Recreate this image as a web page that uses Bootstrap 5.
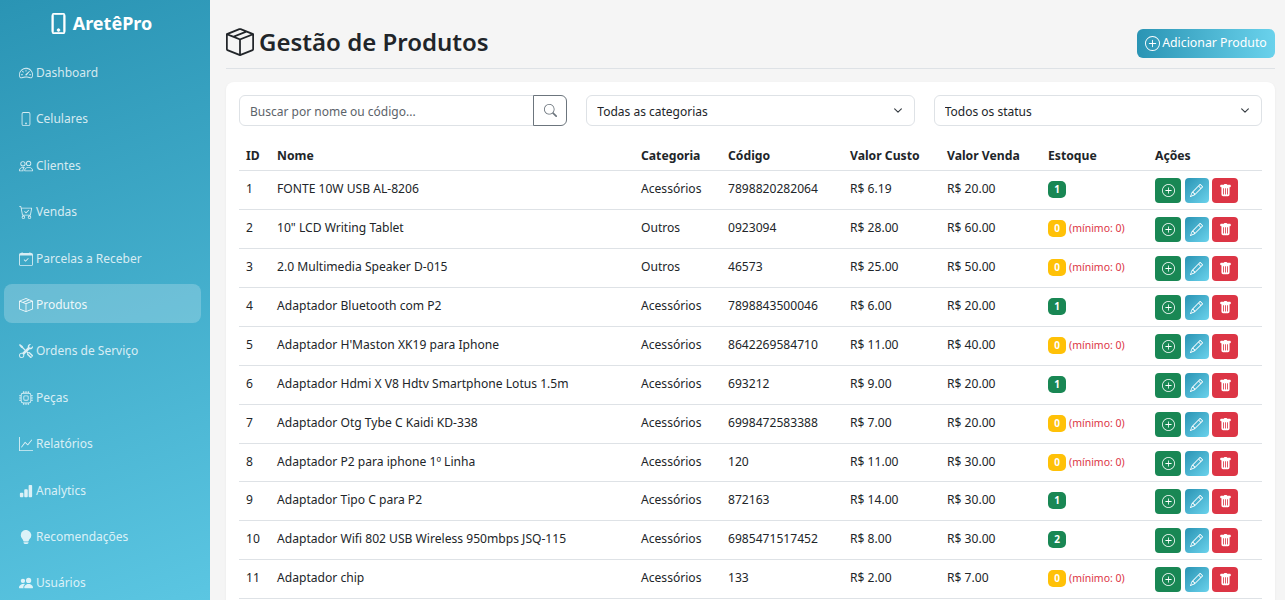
<!DOCTYPE html>
<html lang="pt-BR">
<head>
  <meta charset="UTF-8" />
  <title>Produtos | AretêPro</title>
  <meta name="viewport" content="width=device-width, initial-scale=1" />
  <link href="https://cdn.jsdelivr.net/npm/bootstrap@5.3.0/dist/css/bootstrap.min.css" rel="stylesheet" />
  <style>
    body {
      background: #f5f5f5;
      font-family: "Noto Sans", "Liberation Sans", sans-serif;
      font-size: 12px;
      color: #212529;
    }

    .ico { width: 1em; height: 1em; fill: currentColor; flex: none; }

    .lateral {
      width: 210px;
      flex: none;
      background: linear-gradient(160deg, #2a94b4, #5bc6e2);
    }
    .marca { font-size: 18px; font-weight: 700; color: #fff; height: 46px; margin-bottom: 6px; padding-right: 10px; }
    .marca .ico { font-size: 21px; stroke: #fff; stroke-width: .7; }
    .lateral .nav-link {
      display: flex;
      align-items: center;
      gap: 3px;
      height: 39px;
      margin: 0 9px 7.4px 4px;
      padding: 3px 15px 0;
      border-radius: 8px;
      color: rgba(255, 255, 255, .8);
      font-size: 12px;
    }
    .lateral .nav-link .ico { font-size: 14px; }
    .lateral .nav-link.ativo { background: rgba(255, 255, 255, .22); color: rgba(255, 255, 255, .9); }

    .conteudo { padding: 0 10px 0 16px; min-width: 0; }
    .topo { height: 69px; padding-top: 16px; border-bottom: 1px solid #dee2e6; margin-bottom: 13px; }
    .topo h1 { font-size: 24px; font-weight: 600; margin: 0; gap: 5px; }
    .topo h1 .ico { font-size: 28px; }
    .btn-gradiente {
      background: linear-gradient(90deg, #2a94b4, #6ad2ec);
      color: #fff;
      border: 0;
      font-size: 12.3px;
      height: 29px;
      width: 138px;
      margin-top: 2px;
      padding: 1px 0 0;
      gap: 2px;
      border-radius: 6px;
    }
    .btn-gradiente:hover { color: #fff; }
    .btn-gradiente .ico { font-size: 15px; }

    .painel { background: #fff; border-radius: 8px; padding: 13px; box-shadow: 0 1px 3px rgba(0, 0, 0, .05); }
    .filtros { --bs-gutter-x: 19px; margin-bottom: 14px; }
    .filtros .form-control, .filtros .form-select { font-size: 12px; height: 31px; border-radius: 6px; padding-top: 6px; padding-bottom: 4px; padding-left: 10px; }
    .filtros .form-select { background-size: 12px 9px; background-position: right 10px center; }
    .filtros .form-control::placeholder { color: #5c636a; }
    .filtros .btn { width: 34px; padding: 0; font-size: 13px; display: flex; align-items: center; justify-content: center; border-radius: 0 6px 6px 0; }

    .tabela { table-layout: fixed; width: 1023px; margin: 0; font-size: 12.1px; }
    .tabela th { font-size: 12.2px; font-weight: 700; padding: 7px 7px 5px; }
    .tabela td { padding: 9px 7px 0; height: 38.9px; vertical-align: top; }
    .c-id { width: 31px; } .c-nome { width: 364px; } .c-cat { width: 87px; } .c-cod { width: 122px; }
    .c-custo { width: 97px; } .c-venda { width: 101px; } .c-est { width: 107px; } .c-acoes { width: 114px; }

    .selo { font-size: 10px; font-weight: 700; width: 18px; height: 17px; padding: 0; line-height: 17px; border-radius: 5px; }
    .minimo { font-size: 10.5px; color: #dc3545; margin-left: 3px; }
    .botoes { gap: 3.5px; margin-top: -2px; }
    .acao { height: 25px; width: 26px; padding: 0; border: 0; border-radius: 4px; font-size: 13px; color: #fff; display: inline-flex; align-items: center; justify-content: center; }
    .acao-edit { width: 24px; background: linear-gradient(135deg, #2a94b4, #6ad2ec); }
    .acao:hover { color: #fff; }
  </style>
</head>
<body>
  <svg width="0" height="0" class="position-absolute">
    <symbol id="i-phone" viewBox="0 0 16 16"><path d="M11 1a1 1 0 0 1 1 1v12a1 1 0 0 1-1 1H5a1 1 0 0 1-1-1V2a1 1 0 0 1 1-1h6zM5 0a2 2 0 0 0-2 2v12a2 2 0 0 0 2 2h6a2 2 0 0 0 2-2V2a2 2 0 0 0-2-2H5z"/><path d="M8 14a1 1 0 1 0 0-2 1 1 0 0 0 0 2z"/></symbol>
    <symbol id="i-speed" viewBox="0 0 16 16"><path d="M8 4a.5.5 0 0 1 .5.5V6a.5.5 0 0 1-1 0V4.5A.5.5 0 0 1 8 4zM3.732 5.732a.5.5 0 0 1 .707 0l.915.914a.5.5 0 1 1-.708.708l-.914-.915a.5.5 0 0 1 0-.707zM2 10a.5.5 0 0 1 .5-.5h1.586a.5.5 0 0 1 0 1H2.5A.5.5 0 0 1 2 10zm9.5 0a.5.5 0 0 1 .5-.5h1.5a.5.5 0 0 1 0 1H12a.5.5 0 0 1-.5-.5zm.754-4.246a.389.389 0 0 0-.527-.02L7.547 9.31a.91.91 0 1 0 1.302 1.258l3.434-4.297a.389.389 0 0 0-.029-.518z"/><path fill-rule="evenodd" d="M0 10a8 8 0 1 1 15.547 2.661c-.442 1.253-1.845 1.602-2.932 1.25C11.309 13.488 9.475 13 8 13c-1.474 0-3.31.488-4.615.911-1.087.352-2.49.003-2.932-1.25A7.988 7.988 0 0 1 0 10zm8-7a7 7 0 0 0-6.603 9.329c.203.575.923.876 1.68.63C4.397 12.533 6.358 12 8 12s3.604.532 4.923.96c.757.245 1.477-.056 1.68-.631A7 7 0 0 0 8 3z"/></symbol>
    <symbol id="i-people" viewBox="0 0 16 16"><path d="M15 14s1 0 1-1-1-4-5-4-5 3-5 4 1 1 1 1h8Zm-7.978-1A.261.261 0 0 1 7 12.996c.001-.264.167-1.03.76-1.72C8.312 10.629 9.282 10 11 10c1.717 0 2.687.63 3.24 1.276.593.69.758 1.457.76 1.72l-.008.002a.274.274 0 0 1-.014.002H7.022ZM11 7a2 2 0 1 0 0-4 2 2 0 0 0 0 4Zm3-2a3 3 0 1 1-6 0 3 3 0 0 1 6 0ZM6.936 9.28a5.88 5.88 0 0 0-1.23-.247A7.35 7.35 0 0 0 5 9c-4 0-5 3-5 4 0 .667.333 1 1 1h4.216A2.238 2.238 0 0 1 5 13c0-1.01.377-2.042 1.09-2.904.243-.294.526-.569.846-.816ZM4.92 10A5.493 5.493 0 0 0 4 13H1c0-.26.164-1.03.76-1.724.545-.636 1.492-1.256 3.16-1.275ZM1.5 5.5a3 3 0 1 1 6 0 3 3 0 0 1-6 0Zm3-2a2 2 0 1 0 0 4 2 2 0 0 0 0-4Z"/></symbol>
    <symbol id="i-cart" viewBox="0 0 16 16"><path d="M11.354 6.354a.5.5 0 0 0-.708-.708L8 8.293 6.854 7.146a.5.5 0 1 0-.708.708l1.5 1.5a.5.5 0 0 0 .708 0l3-3z"/><path d="M0 1.5A.5.5 0 0 1 .5 1H2a.5.5 0 0 1 .485.379L2.89 3H14.5a.5.5 0 0 1 .491.592l-1.5 8A.5.5 0 0 1 13 12H4a.5.5 0 0 1-.491-.408L2.01 3.607 1.61 2H.5a.5.5 0 0 1-.5-.5zM3.102 4l1.313 7h8.17l1.313-7H3.102zM5 12a2 2 0 1 0 0 4 2 2 0 0 0 0-4zm7 0a2 2 0 1 0 0 4 2 2 0 0 0 0-4zm-7 1a1 1 0 1 1 0 2 1 1 0 0 1 0-2zm7 0a1 1 0 1 1 0 2 1 1 0 0 1 0-2z"/></symbol>
    <symbol id="i-cal" viewBox="0 0 16 16"><path d="M10.854 7.146a.5.5 0 0 1 0 .708l-3 3a.5.5 0 0 1-.708 0l-1.5-1.5a.5.5 0 1 1 .708-.708L7.5 9.793l2.646-2.647a.5.5 0 0 1 .708 0z"/><path d="M3.5 0a.5.5 0 0 1 .5.5V1h8V.5a.5.5 0 0 1 1 0V1h1a2 2 0 0 1 2 2v11a2 2 0 0 1-2 2H2a2 2 0 0 1-2-2V3a2 2 0 0 1 2-2h1V.5a.5.5 0 0 1 .5-.5zM1 4v10a1 1 0 0 0 1 1h12a1 1 0 0 0 1-1V4H1z"/></symbol>
    <symbol id="i-box" viewBox="0 0 16 16"><path d="M8.186 1.113a.5.5 0 0 0-.372 0L1.846 3.5l2.404.961L10.404 2l-2.218-.887zm3.564 1.426L5.596 5 8 5.961 14.154 3.5l-2.404-.961zm3.25 1.7-6.5 2.6v7.922l6.5-2.6V4.24zM7.5 14.762V6.838L1 4.239v7.925l6.5 2.6zM7.443.184a1.5 1.5 0 0 1 1.114 0l7.129 2.852A.5.5 0 0 1 16 3.5v8.662a1 1 0 0 1-.629.928l-7.185 2.874a.5.5 0 0 1-.372 0L.63 13.09a1 1 0 0 1-.63-.928V3.5a.5.5 0 0 1 .314-.464L7.443.184z"/></symbol>
    <symbol id="i-tools" viewBox="0 0 16 16"><path d="M1 0 0 1l2.2 3.081a1 1 0 0 0 .815.419h.07a1 1 0 0 1 .708.293l2.675 2.675-2.617 2.654A3.003 3.003 0 0 0 0 13a3 3 0 1 0 5.878-.851l2.654-2.617.968.968-.305.914a1 1 0 0 0 .242 1.023l3.27 3.27a.997.997 0 0 0 1.414 0l1.586-1.586a.997.997 0 0 0 0-1.414l-3.27-3.27a1 1 0 0 0-1.023-.242L10.5 9.5l-.96-.96 2.68-2.643A3.005 3.005 0 0 0 16 3c0-.269-.035-.53-.102-.777l-2.14 2.141L12 4l-.364-1.757L13.777.102a3 3 0 0 0-3.675 3.68L7.462 6.46 4.793 3.793a1 1 0 0 1-.293-.707v-.071a1 1 0 0 0-.419-.814L1 0Zm9.646 10.646a.5.5 0 0 1 .708 0l2.914 2.915a.5.5 0 0 1-.707.707l-2.915-2.914a.5.5 0 0 1 0-.708ZM3 11l.471.242.529.026.287.445.445.287.026.529L5 13l-.242.471-.026.529-.445.287-.287.445-.529.026L3 15l-.471-.242L2 14.732l-.287-.445L1.268 14l-.026-.529L1 13l.242-.471.026-.529.445-.287.287-.445.529-.026L3 11Z"/></symbol>
    <symbol id="i-cpu" viewBox="0 0 16 16"><path d="M5 0a.5.5 0 0 1 .5.5V2h1V.5a.5.5 0 0 1 1 0V2h1V.5a.5.5 0 0 1 1 0V2h1V.5a.5.5 0 0 1 1 0V2A2.5 2.5 0 0 1 14 4.5h1.5a.5.5 0 0 1 0 1H14v1h1.5a.5.5 0 0 1 0 1H14v1h1.5a.5.5 0 0 1 0 1H14v1h1.5a.5.5 0 0 1 0 1H14a2.5 2.5 0 0 1-2.5 2.5v1.5a.5.5 0 0 1-1 0V14h-1v1.5a.5.5 0 0 1-1 0V14h-1v1.5a.5.5 0 0 1-1 0V14h-1v1.5a.5.5 0 0 1-1 0V14A2.5 2.5 0 0 1 2 11.5H.5a.5.5 0 0 1 0-1H2v-1H.5a.5.5 0 0 1 0-1H2v-1H.5a.5.5 0 0 1 0-1H2v-1H.5a.5.5 0 0 1 0-1H2A2.5 2.5 0 0 1 4.5 2V.5A.5.5 0 0 1 5 0zm-.5 3A1.5 1.5 0 0 0 3 4.5v7A1.5 1.5 0 0 0 4.5 13h7a1.5 1.5 0 0 0 1.5-1.5v-7A1.5 1.5 0 0 0 11.5 3h-7zM5 6.5A1.5 1.5 0 0 1 6.5 5h3A1.5 1.5 0 0 1 11 6.5v3A1.5 1.5 0 0 1 9.5 11h-3A1.5 1.5 0 0 1 5 9.5v-3zM6.5 6a.5.5 0 0 0-.5.5v3a.5.5 0 0 0 .5.5h3a.5.5 0 0 0 .5-.5v-3a.5.5 0 0 0-.5-.5h-3z"/></symbol>
    <symbol id="i-graph" viewBox="0 0 16 16"><path fill-rule="evenodd" d="M0 0h1v15h15v1H0V0Zm14.817 3.113a.5.5 0 0 1 .07.704l-4.5 5.5a.5.5 0 0 1-.74.037L7.06 6.767l-3.656 5.027a.5.5 0 0 1-.808-.588l4-5.5a.5.5 0 0 1 .758-.06l2.609 2.61 4.15-5.073a.5.5 0 0 1 .704-.07Z"/></symbol>
    <symbol id="i-bars" viewBox="0 0 16 16"><path d="M1 11a1 1 0 0 1 1-1h2a1 1 0 0 1 1 1v3a1 1 0 0 1-1 1H2a1 1 0 0 1-1-1v-3zm5-4a1 1 0 0 1 1-1h2a1 1 0 0 1 1 1v7a1 1 0 0 1-1 1H7a1 1 0 0 1-1-1V7zm5-5a1 1 0 0 1 1-1h2a1 1 0 0 1 1 1v12a1 1 0 0 1-1 1h-2a1 1 0 0 1-1-1V2z"/></symbol>
    <symbol id="i-bulb" viewBox="0 0 16 16"><path d="M2 6a6 6 0 1 1 10.174 4.31c-.203.196-.359.4-.453.619l-.762 1.769A.5.5 0 0 1 10.5 13h-5a.5.5 0 0 1-.46-.302l-.761-1.77a1.964 1.964 0 0 0-.453-.618A5.984 5.984 0 0 1 2 6zm3 8.5a.5.5 0 0 1 .5-.5h5a.5.5 0 0 1 0 1l-.224.447a1 1 0 0 1-.894.553H6.618a1 1 0 0 1-.894-.553L5.5 15a.5.5 0 0 1-.5-.5z"/></symbol>
    <symbol id="i-peoplef" viewBox="0 0 16 16"><path d="M7 14s-1 0-1-1 1-4 5-4 5 3 5 4-1 1-1 1H7Zm4-6a3 3 0 1 0 0-6 3 3 0 0 0 0 6Zm-5.784 6A2.238 2.238 0 0 1 5 13c0-1.355.68-2.75 1.936-3.72A6.325 6.325 0 0 0 5 9c-4 0-5 3-5 4s1 1 1 1h4.216ZM4.5 8a2.5 2.5 0 1 0 0-5 2.5 2.5 0 0 0 0 5Z"/></symbol>
    <symbol id="i-search" viewBox="0 0 16 16"><path d="M11.742 10.344a6.5 6.5 0 1 0-1.397 1.398h-.001c.03.04.062.078.098.115l3.85 3.85a1 1 0 0 0 1.415-1.414l-3.85-3.85a1.007 1.007 0 0 0-.115-.1zM12 6.5a5.5 5.5 0 1 1-11 0 5.5 5.5 0 0 1 11 0z"/></symbol>
    <symbol id="i-plus" viewBox="0 0 16 16"><path d="M8 15A7 7 0 1 1 8 1a7 7 0 0 1 0 14zm0 1A8 8 0 1 0 8 0a8 8 0 0 0 0 16z"/><path d="M8 4a.5.5 0 0 1 .5.5v3h3a.5.5 0 0 1 0 1h-3v3a.5.5 0 0 1-1 0v-3h-3a.5.5 0 0 1 0-1h3v-3A.5.5 0 0 1 8 4z"/></symbol>
    <symbol id="i-pencil" viewBox="0 0 16 16"><path d="M12.146.146a.5.5 0 0 1 .708 0l3 3a.5.5 0 0 1 0 .708l-10 10a.5.5 0 0 1-.168.11l-5 2a.5.5 0 0 1-.65-.65l2-5a.5.5 0 0 1 .11-.168l10-10zM11.207 2.5 13.5 4.793 14.793 3.5 12.5 1.207 11.207 2.5zm1.586 3L10.5 3.207 4 9.707V10h.5a.5.5 0 0 1 .5.5v.5h.5a.5.5 0 0 1 .5.5v.5h.293l6.5-6.5zm-9.761 5.175-.106.106-1.528 3.821 3.821-1.528.106-.106A.5.5 0 0 1 5 12.5V12h-.5a.5.5 0 0 1-.5-.5V11h-.5a.5.5 0 0 1-.468-.325z"/></symbol>
    <symbol id="i-trash" viewBox="0 0 16 16"><path d="M2.5 1a1 1 0 0 0-1 1v1a1 1 0 0 0 1 1H3v9a2 2 0 0 0 2 2h6a2 2 0 0 0 2-2V4h.5a1 1 0 0 0 1-1V2a1 1 0 0 0-1-1H10a1 1 0 0 0-1-1H7a1 1 0 0 0-1 1H2.5zm3 4a.5.5 0 0 1 .5.5v7a.5.5 0 0 1-1 0v-7a.5.5 0 0 1 .5-.5zM8 5a.5.5 0 0 1 .5.5v7a.5.5 0 0 1-1 0v-7A.5.5 0 0 1 8 5zm3 .5v7a.5.5 0 0 1-1 0v-7a.5.5 0 0 1 1 0z"/></symbol>
  </svg>

  <div class="d-flex vh-100 overflow-hidden">
    <nav class="lateral overflow-hidden">
      <div class="marca d-flex align-items-center justify-content-center gap-1">
        <svg class="ico"><use href="#i-phone"/></svg>AretêPro
      </div>
      <div class="nav flex-column flex-nowrap" id="menu"></div>
    </nav>

    <main class="conteudo flex-grow-1">
      <div class="topo d-flex justify-content-between align-items-center">
        <h1 class="d-flex align-items-center"><svg class="ico"><use href="#i-box"/></svg>Gestão de Produtos</h1>
        <button class="btn btn-gradiente d-flex align-items-center justify-content-center"><svg class="ico"><use href="#i-plus"/></svg>Adicionar Produto</button>
      </div>

      <div class="painel">
        <div class="row filtros">
          <div class="col-4">
            <div class="input-group">
              <input type="text" class="form-control" placeholder="Buscar por nome ou código..." />
              <button class="btn btn-outline-secondary" type="button"><svg class="ico"><use href="#i-search"/></svg></button>
            </div>
          </div>
          <div class="col-4">
            <select class="form-select"><option>Todas as categorias</option></select>
          </div>
          <div class="col-4">
            <select class="form-select"><option>Todos os status</option></select>
          </div>
        </div>

        <table class="table tabela">
          <thead>
            <tr>
              <th class="c-id">ID</th>
              <th class="c-nome">Nome</th>
              <th class="c-cat">Categoria</th>
              <th class="c-cod">Código</th>
              <th class="c-custo">Valor Custo</th>
              <th class="c-venda">Valor Venda</th>
              <th class="c-est">Estoque</th>
              <th class="c-acoes">Ações</th>
            </tr>
          </thead>
          <tbody id="produtos"></tbody>
        </table>
      </div>
    </main>
  </div>

  <script src="https://cdn.jsdelivr.net/npm/bootstrap@5.3.0/dist/js/bootstrap.bundle.min.js"></script>
  <script>
    const icone = (id) => `<svg class="ico"><use href="#i-${id}"/></svg>`;

    const menu = [
      ["speed", "Dashboard"], ["phone", "Celulares"], ["people", "Clientes"], ["cart", "Vendas"],
      ["cal", "Parcelas a Receber"], ["box", "Produtos"], ["tools", "Ordens de Serviço"], ["cpu", "Peças"],
      ["graph", "Relatórios"], ["bars", "Analytics"], ["bulb", "Recomendações"], ["peoplef", "Usuários"],
    ];
    document.getElementById("menu").innerHTML = menu.map(([ic, nome]) =>
      `<a href="#" class="nav-link ${nome === "Produtos" ? "ativo" : ""}">${icone(ic)}${nome}</a>`
    ).join("");

    const produtos = [
      ["FONTE 10W USB AL-8206", "Acessórios", "7898820282064", "6.19", "20.00", 1],
      ['10" LCD Writing Tablet', "Outros", "0923094", "28.00", "60.00", 0],
      ["2.0 Multimedia Speaker D-015", "Outros", "46573", "25.00", "50.00", 0],
      ["Adaptador Bluetooth com P2", "Acessórios", "7898843500046", "6.00", "20.00", 1],
      ["Adaptador H'Maston XK19 para Iphone", "Acessórios", "8642269584710", "11.00", "40.00", 0],
      ["Adaptador Hdmi X V8 Hdtv Smartphone Lotus 1.5m", "Acessórios", "693212", "9.00", "20.00", 1],
      ["Adaptador Otg Tybe C Kaidi KD-338", "Acessórios", "6998472583388", "7.00", "20.00", 0],
      ["Adaptador P2 para iphone 1º Linha", "Acessórios", "120", "11.00", "30.00", 0],
      ["Adaptador Tipo C para P2", "Acessórios", "872163", "14.00", "30.00", 1],
      ["Adaptador Wifi 802 USB Wireless 950mbps JSQ-115", "Acessórios", "6985471517452", "8.00", "30.00", 2],
      ["Adaptador chip", "Acessórios", "133", "2.00", "7.00", 0],
    ];
    document.getElementById("produtos").innerHTML = produtos.map((p, i) => `
      <tr>
        <td>${i + 1}</td>
        <td>${p[0]}</td>
        <td>${p[1]}</td>
        <td>${p[2]}</td>
        <td>R$ ${p[3]}</td>
        <td>R$ ${p[4]}</td>
        <td>${p[5] > 0
          ? `<span class="badge selo text-bg-success">${p[5]}</span>`
          : `<span class="badge selo text-bg-warning text-white">0</span><span class="minimo">(mínimo: 0)</span>`}</td>
        <td>
          <div class="d-flex botoes">
            <button class="btn acao btn-success">${icone("plus")}</button>
            <button class="btn acao acao-edit">${icone("pencil")}</button>
            <button class="btn acao btn-danger">${icone("trash")}</button>
          </div>
        </td>
      </tr>`).join("");
  </script>
</body>
</html>
